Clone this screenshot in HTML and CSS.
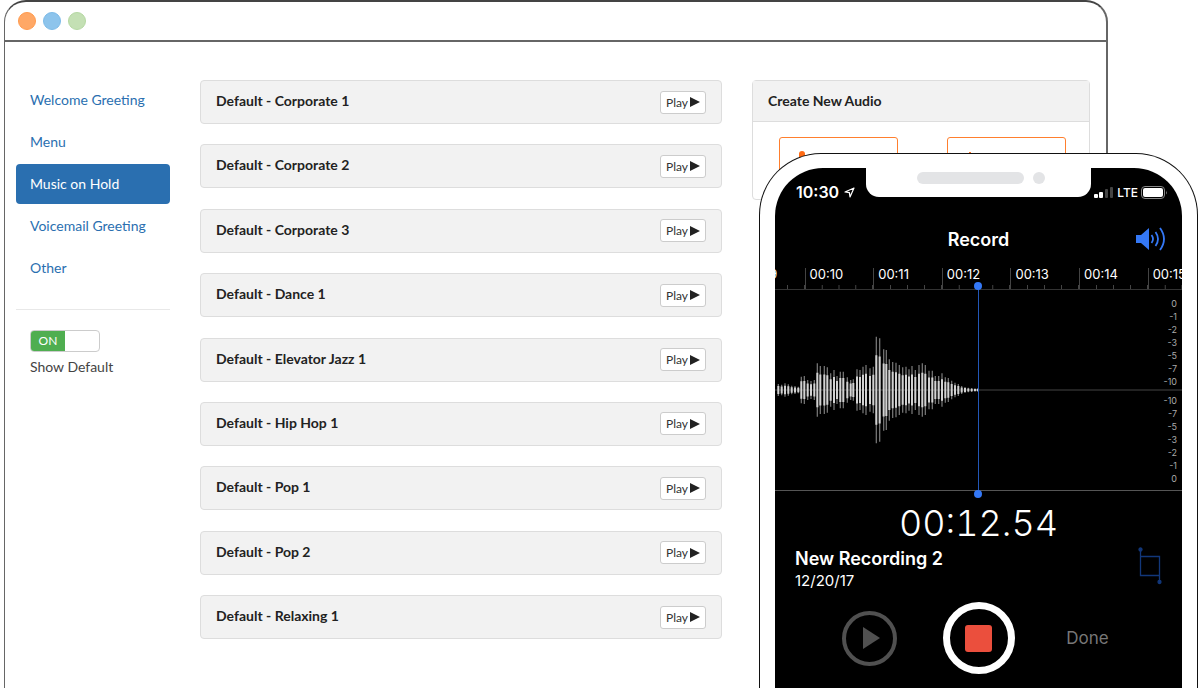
FILE: index.html
```html
<!DOCTYPE html>
<html lang="en">
<head>
    <meta charset="UTF-8">
    <meta name="viewport" content="width=device-width, initial-scale=1.0">
    <title>Music on Hold</title>
    <link rel="stylesheet" href="styles.css">
</head>
<body>
    <div class="browser">
        <div class="browser-bar">
            <span class="dot dot-orange"></span>
            <span class="dot dot-blue"></span>
            <span class="dot dot-green"></span>
        </div>
        <div class="browser-body">
            <aside class="sidebar">
                <nav class="menu">
                    <a href="#">Welcome Greeting</a>
                    <a href="#">Menu</a>
                    <a href="#" class="active">Music on Hold</a>
                    <a href="#">Voicemail Greeting</a>
                    <a href="#">Other</a>
                </nav>
                <div class="show-default">
                    <label class="switch" for="show-default">
                        <input type="checkbox" id="show-default" checked>
                        <span class="switch-on">ON</span>
                    </label>
                    <label for="show-default">Show Default</label>
                </div>
            </aside>
            <main class="tracks">
                <div class="track"><span>Default - Corporate 1</span><button type="button" class="play">Play<svg width="10" height="12" viewBox="0 0 10 12"><path d="M0 1L10 6L0 11Z"/></svg></button></div>
                <div class="track"><span>Default - Corporate 2</span><button type="button" class="play">Play<svg width="10" height="12" viewBox="0 0 10 12"><path d="M0 1L10 6L0 11Z"/></svg></button></div>
                <div class="track"><span>Default - Corporate 3</span><button type="button" class="play">Play<svg width="10" height="12" viewBox="0 0 10 12"><path d="M0 1L10 6L0 11Z"/></svg></button></div>
                <div class="track"><span>Default - Dance 1</span><button type="button" class="play">Play<svg width="10" height="12" viewBox="0 0 10 12"><path d="M0 1L10 6L0 11Z"/></svg></button></div>
                <div class="track"><span>Default - Elevator Jazz 1</span><button type="button" class="play">Play<svg width="10" height="12" viewBox="0 0 10 12"><path d="M0 1L10 6L0 11Z"/></svg></button></div>
                <div class="track"><span>Default - Hip Hop 1</span><button type="button" class="play">Play<svg width="10" height="12" viewBox="0 0 10 12"><path d="M0 1L10 6L0 11Z"/></svg></button></div>
                <div class="track"><span>Default - Pop 1</span><button type="button" class="play">Play<svg width="10" height="12" viewBox="0 0 10 12"><path d="M0 1L10 6L0 11Z"/></svg></button></div>
                <div class="track"><span>Default - Pop 2</span><button type="button" class="play">Play<svg width="10" height="12" viewBox="0 0 10 12"><path d="M0 1L10 6L0 11Z"/></svg></button></div>
                <div class="track"><span>Default - Relaxing 1</span><button type="button" class="play">Play<svg width="10" height="12" viewBox="0 0 10 12"><path d="M0 1L10 6L0 11Z"/></svg></button></div>
            </main>
            <section class="create">
                <h2>Create New Audio</h2>
                <div class="create-body">
                    <button type="button" class="create-option" aria-label="Record">
                        <svg width="10" height="16" viewBox="0 0 10 16"><rect x="2" width="6" height="10" rx="3" fill="#ff6a13"/><path d="M1 7a4 4 0 0 0 8 0M5 11v4" fill="none" stroke="#ff6a13"/></svg>
                    </button>
                    <button type="button" class="create-option" aria-label="Upload">
                        <svg width="10" height="16" viewBox="0 0 10 16"><path d="M5 1v12M1 6l4-5 4 5" fill="none" stroke="#ff6a13"/></svg>
                    </button>
                </div>
            </section>
        </div>
    </div>

    <div class="phone">
        <div class="screen">
            <div class="status">
                <div class="clock">10:30
                    <svg width="11" height="11" viewBox="0 0 11 11"><path d="M10 1L6 10L5.4 5.6L1 5Z" fill="none" stroke="#fff" stroke-width="1.2" stroke-linejoin="round"/></svg>
                </div>
                <div class="notch"><span class="speaker"></span><span class="camera"></span></div>
                <div class="signal">
                    <svg width="20" height="12" viewBox="0 0 20 12"><rect y="8" width="4" height="4" rx="1" fill="#fff"/><rect x="5" y="6" width="4" height="6" rx="1" fill="#fff"/><rect x="11" y="3" width="3" height="9" rx="1" fill="#444"/><rect x="16" y="1" width="3" height="11" rx="1" fill="#444"/></svg>
                    <span>LTE</span>
                    <svg width="27" height="13" viewBox="0 0 27 13"><rect x=".5" y=".5" width="23" height="12" rx="3.5" fill="none" stroke="#888"/><rect x="2" y="2" width="20" height="9" rx="2" fill="#fff"/><path d="M25 4.500q1.500 2 0 4z" fill="#888"/></svg>
                </div>
            </div>
            <div class="title-bar">
                <h1>Record</h1>
                <svg class="volume" width="30" height="24" viewBox="0 0 30 24"><path d="M0 8h5l8-7v22l-8-7H0z" fill="#3478f6"/><path d="M15.500 8q3 4 0 8M19.500 5q5 7 0 14M24 1q8 11 0 22" fill="none" stroke="#3478f6" stroke-width="1.800"/></svg>
            </div>
            <ul class="ruler">
                <li>00:09</li>
                <li>00:10</li>
                <li>00:11</li>
                <li>00:12</li>
                <li>00:13</li>
                <li>00:14</li>
                <li>00:15</li>
            </ul>
            <div class="wave">
                <svg class="wave-plot" viewBox="0 0 1221 600" preserveAspectRatio="none">
                    <path d="M0 300H1221" stroke="#444" stroke-width="3"/>
                    <path id="wave-soft" fill="none" stroke="#707070" stroke-width="4"/>
                    <path id="wave-loud" fill="none" stroke="#d2d2d2" stroke-width="6"/>
                </svg>
                <span class="playhead"></span>
                <div class="decibels">
                    <ul><li>0</li><li>-1</li><li>-2</li><li>-3</li><li>-5</li><li>-7</li><li>-10</li></ul>
                    <ul><li>-10</li><li>-7</li><li>-5</li><li>-3</li><li>-2</li><li>-1</li><li>0</li></ul>
                </div>
            </div>
            <div class="timer">00:12.54</div>
            <div class="recording">
                <div>
                    <h2>New Recording 2</h2>
                    <p>12/20/17</p>
                </div>
                <svg width="24" height="38" viewBox="0 0 24 38" fill="none" stroke="#12377a" stroke-width="1.300"><path d="M2.500 2v26.500h19M2.500 9.500h19V35"/><circle cx="2.500" cy="2.500" r="1.500" fill="#12377a"/><circle cx="21.500" cy="35" r="1.500" fill="#12377a"/></svg>
            </div>
            <div class="controls">
                <button type="button" class="replay" aria-label="Play"><svg width="17" height="22" viewBox="0 0 17 22"><path d="M0 0L17 11L0 22Z" fill="#505050"/></svg></button>
                <button type="button" class="stop" aria-label="Stop"><span></span></button>
                <button type="button" class="done">Done</button>
            </div>
        </div>
    </div>

    <script>
        // position and half height of each bar in the waveform
        const bars = [
            [10, 18], [20, 16], [30, 20], [40, 17], [50, 13], [60, 12], [70, 10],
            [79, 40], [88, 42], [98, 30], [108, 27], [118, 30], [127, 80], [136, 72],
            [148, 72], [157, 68], [167, 50], [177, 60], [186, 42], [196, 55], [205, 55],
            [217, 38], [227, 30], [235, 32], [246, 62], [255, 60], [264, 70], [273, 75],
            [285, 65], [295, 70], [304, 160], [314, 155], [326, 122], [334, 120], [343, 92],
            [353, 84], [363, 82], [373, 75], [383, 68], [393, 70], [402, 62], [411, 72],
            [421, 60], [432, 75], [442, 80], [451, 75], [462, 58], [472, 58], [481, 42],
            [491, 42], [501, 50], [511, 38], [520, 36], [530, 28], [540, 22], [550, 18],
            [560, 12], [570, 9], [580, 7], [590, 6], [600, 5], [608, 5]
        ];

        function wavePath(scale) {
            return bars.map(([x, h]) => `M${x} ${300 - h * scale}V${300 + h * scale}`).join('');
        }

        document.getElementById('wave-soft').setAttribute('d', wavePath(1));
        document.getElementById('wave-loud').setAttribute('d', wavePath(0.65));
    </script>
</body>
</html>
```
FILE: styles.css
```css
* {
    box-sizing: border-box;
}
body {
    margin: 0;
    min-height: 100vh;
    position: relative;
    overflow: hidden;
    background: #fff;
    font-family: Lato, sans-serif;
    font-size: 14px;
    color: #444;
}
h1, h2, p, ul {
    margin: 0;
    padding: 0;
}
ul {
    list-style: none;
}
button {
    font-family: inherit;
    cursor: pointer;
}

/* browser window */
.browser {
    display: flex;
    flex-direction: column;
    min-height: 100vh;
    margin: 0 92px 0 4px;
    border: 2px solid #666;
    border-top-color: #444;
    border-left-width: 1px;
    border-bottom: 0;
    border-radius: 22px 22px 0 0;
}
.browser-bar {
    display: flex;
    align-items: center;
    gap: 7px;
    height: 40px;
    padding: 0 13px;
    border-bottom: 2px solid #666;
}
.dot {
    width: 18px;
    height: 18px;
    border-radius: 50%;
    border: 1px solid;
}
.dot-orange {
    background: #ffa866;
    border-color: #ff9a4d;
}
.dot-blue {
    background: #8dc4ec;
    border-color: #7dbbe8;
}
.dot-green {
    background: #c4e0b4;
    border-color: #b5d8a2;
}
.browser-body {
    flex: 1;
    display: grid;
    grid-template-columns: 154fr 522fr 338fr;
    gap: 30px;
    padding: 38px 16px 49px 11px;
}

/* sidebar */
.menu {
    display: flex;
    flex-direction: column;
    gap: 2px;
    padding-bottom: 21px;
    border-bottom: 1px solid #e8e8e8;
}
.menu a {
    padding: 0 14px;
    line-height: 40px;
    border-radius: 4px;
    color: #2a6fb0;
    text-decoration: none;
    white-space: nowrap;
}
.menu .active {
    background: #2a6fb0;
    color: #fff;
}
.show-default {
    display: flex;
    flex-direction: column;
    align-items: flex-start;
    gap: 6px;
    padding: 20px 14px;
}
.switch {
    display: flex;
    width: 70px;
    height: 22px;
    border: 1px solid #ccc;
    border-radius: 4px;
    overflow: hidden;
}
.switch input {
    appearance: none;
    margin: 0;
}
.switch-on {
    width: 50%;
    background: #4fae50;
    color: #fff;
    font-size: 12px;
    line-height: 20px;
    text-align: center;
}

/* track list */
.tracks {
    display: flex;
    flex-direction: column;
    justify-content: space-between;
}
.track {
    display: flex;
    justify-content: space-between;
    align-items: center;
    height: 44px;
    padding: 0 15px;
    border: 1px solid #ddd;
    border-radius: 4px;
    background: #f2f2f2;
    color: #222;
    font-weight: bold;
}
.track span {
    padding-bottom: 3px;
}
.play {
    display: flex;
    align-items: center;
    justify-content: center;
    gap: 2px;
    width: 46px;
    height: 23px;
    padding: 0;
    border: 1px solid #ccc;
    border-radius: 3px;
    background: #fff;
    color: #333;
    font-size: 12px;
}
.play svg {
    fill: #222;
}

/* create panel */
.create {
    align-self: start;
    border: 1px solid #ddd;
    border-radius: 4px;
}
.create h2 {
    padding: 0 15px;
    border-bottom: 1px solid #ddd;
    background: #f2f2f2;
    color: #222;
    font-size: 14px;
    line-height: 40px;
}
.create-body {
    display: flex;
    justify-content: space-between;
    padding: 15px 23px 16px 26px;
}
.create-option {
    display: flex;
    width: 119px;
    height: 46px;
    padding: 13px 17px;
    border: 1px solid #ff7f2e;
    border-radius: 3px;
    background: #fff;
}

/* phone */
.phone {
    position: absolute;
    top: 153px;
    right: 2px;
    bottom: 0;
    width: 439px;
    padding: 14px 15px 0;
    overflow: hidden;
    border: 1px solid #111;
    border-bottom: 0;
    border-radius: 62px 62px 0 0;
    background: #fff;
    color: #fff;
    font-family: Inter, sans-serif;
}
.screen {
    height: 100%;
    overflow: hidden;
    border-radius: 48px 48px 0 0;
    background: #000;
}
.status {
    display: grid;
    grid-template-columns: 1fr 225px 1fr;
    height: 48px;
}
.clock {
    display: flex;
    align-items: center;
    gap: 5px;
    padding-left: 21px;
    font-size: 16px;
    font-weight: 600;
}
.notch {
    display: flex;
    justify-content: center;
    gap: 9px;
    height: 29px;
    padding: 4px 0 0 5px;
    border-radius: 0 0 13px 13px;
    background: #fff;
}
.speaker {
    width: 107px;
    height: 12px;
    border-radius: 6px;
    background: #e3e4e6;
}
.camera {
    width: 12px;
    height: 12px;
    border-radius: 50%;
    background: #e3e4e6;
}
.signal {
    display: flex;
    align-items: center;
    justify-content: flex-end;
    gap: 3px;
    padding-right: 14px;
    font-size: 12px;
    font-weight: 500;
}
.title-bar {
    display: grid;
    grid-template-columns: 1fr auto 1fr;
    align-items: center;
    height: 46px;
    padding: 0 16px;
}
.title-bar h1 {
    grid-column: 2;
    font-size: 18px;
    font-weight: 600;
}
.volume {
    justify-self: end;
}

/* time ruler */
.ruler {
    display: flex;
    height: 28px;
    padding-top: 6px;
    margin-left: -39px;
    border-bottom: 1px solid #333;
}
.ruler li {
    flex: 0 0 calc(100% / 13 * 2);
    padding-left: 4px;
    border-left: 1px solid #444;
    background: linear-gradient(to right, #444 1px, transparent 1px) -1px 100% / 25% 4px repeat-x;
    font-size: 13px;
    line-height: 12px;
}

/* waveform */
.wave {
    position: relative;
    display: flex;
    justify-content: flex-end;
    height: 201px;
    border-bottom: 1px solid #555;
}
.wave-plot {
    position: absolute;
    width: 100%;
    height: 100%;
}
.playhead {
    position: absolute;
    top: 0;
    bottom: 0;
    left: calc(50% - 1px);
    width: 1px;
    background: #2257b8;
}
.playhead::before,
.playhead::after {
    content: "";
    position: absolute;
    left: -4px;
    width: 8px;
    height: 8px;
    border-radius: 50%;
    background: #3478f6;
}
.playhead::before {
    top: -8px;
}
.playhead::after {
    bottom: -8px;
}
.decibels {
    display: flex;
    flex-direction: column;
    gap: 6px;
    padding: 7px 5px 0 0;
    color: #aaa;
    font-size: 9px;
    line-height: 13px;
    text-align: right;
}

/* recording details */
.timer {
    padding-top: 8px;
    font-size: 36px;
    font-weight: 300;
    font-variant-numeric: tabular-nums;
    line-height: 48px;
    text-align: center;
}
.recording {
    display: flex;
    justify-content: space-between;
    align-items: flex-start;
    padding: 0 20px;
}
.recording h2 {
    font-size: 18px;
    font-weight: 600;
    line-height: 24px;
}
.recording p {
    font-size: 15px;
    line-height: 20px;
}
.controls {
    display: grid;
    grid-template-columns: repeat(3, 1fr);
    place-items: center;
    padding: 11px 40px;
}
.controls button {
    display: flex;
    align-items: center;
    justify-content: center;
    padding: 0;
    border: 0;
    background: none;
}
.controls .replay {
    width: 55px;
    height: 55px;
    padding-left: 3px;
    border: 4px solid #505050;
    border-radius: 50%;
}
.controls .stop {
    width: 72px;
    height: 72px;
    border: 7px solid #fff;
    border-radius: 50%;
}
.stop span {
    width: 27px;
    height: 27px;
    border-radius: 3px;
    background: #eb4f3d;
}
.controls .done {
    color: #777;
    font-size: 17px;
}
```
